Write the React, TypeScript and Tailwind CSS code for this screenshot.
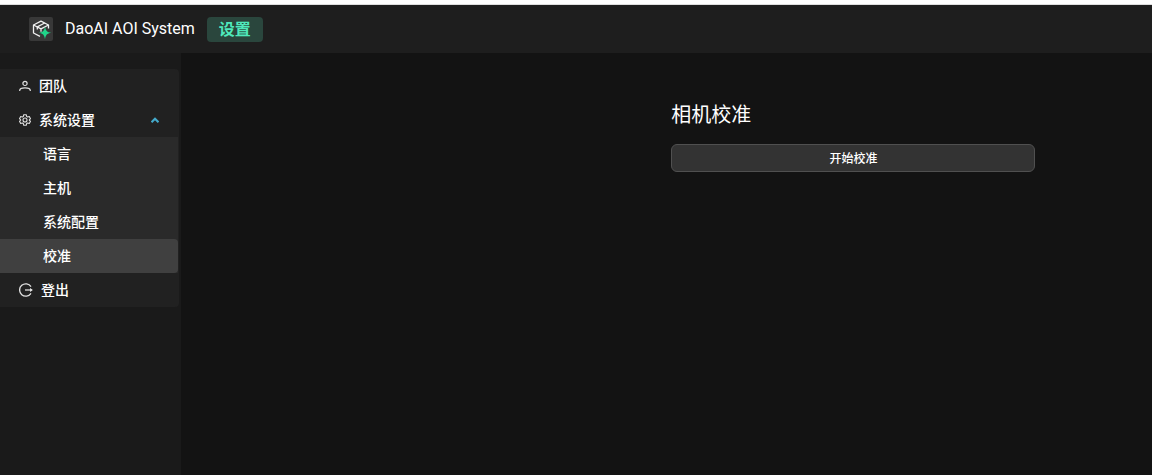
import React, { useState } from "react";

const UserIcon = () => (
  <svg className="size-3 shrink-0" viewBox="0 0 12 12" fill="none" stroke="#e0e0e0" strokeWidth="1.200" aria-hidden="true">
    <circle cx="6" cy="3.4" r="2.1" />
    <path d="M0.7 11v-.4C.7 8.600 3.100 7.900 6 7.900s5.300.700 5.300 2.700v.4" />
  </svg>
);

const GearIcon = () => (
  <svg className="size-3 shrink-0" viewBox="0 0 24 24" fill="none" stroke="#e0e0e0" strokeWidth="2.200" strokeLinejoin="round" aria-hidden="true">
    <path d="M9.500 1.500h5l.8 3.400 2 1.200 3.300-1 2.400 4.200-2.400 2.400v.6l2.400 2.400-2.400 4.200-3.300-1-2 1.200-.8 3.400h-5l-.8-3.400-2-1.200-3.300 1L1 14.700l2.400-2.400v-.6L1 9.300l2.400-4.200 3.300 1 2-1.200z" />
    <circle cx="12" cy="12" r="4" />
  </svg>
);

const LogoutIcon = () => (
  <svg className="size-3.5 shrink-0" viewBox="0 0 14 14" fill="none" stroke="#e0e0e0" strokeWidth="1.300" aria-hidden="true">
    <path d="M12 3.600A6.200 6.200 0 1 0 12 10.400" />
    <path d="M6 7h7" />
    <path d="M11 5.100 13.900 7 11 8.900z" fill="#e0e0e0" stroke="none" />
  </svg>
);

const Logo = () => (
  <svg className="size-6 shrink-0" viewBox="0 0 24 24" fill="none" aria-hidden="true">
    <rect width="24" height="24" rx="2" fill="#383838" />
    <g stroke="#f0f0f0" strokeWidth="1.300" strokeLinejoin="round">
      <path d="M11 19.300 4.500 16V8L12 4.200 19.500 8v3.500" />
      <path d="M4.500 8 12 11.800 19.500 8M12 11.800v3" />
      <path d="M15.700 6 8.300 9.900v2.600" />
    </g>
    <path d="M16 9.400c.7 4.300 2 5.700 6.300 6.400-4.300.7-5.600 2-6.300 6.400-.7-4.400-2-5.700-6.300-6.400 4.300-.7 5.600-2.100 6.300-6.400z" fill="#20d58a" />
  </svg>
);

const settings = ["语言", "主机", "系统配置", "校准"];

export default function App() {
  const [open, setOpen] = useState(true);
  const [active, setActive] = useState("校准");

  return (
    <div className="flex min-h-screen flex-col border-t-4 border-white bg-[#131313] font-['Open_Sans','Noto_Sans_CJK_SC',sans-serif] text-white">
      <header className="flex h-[49px] items-center border-t border-[#dedede] bg-[#1e1e1e] pl-[29px]">
        <Logo />
        <span className="ml-3 font-['Roboto',sans-serif] text-base">DaoAI AOI System</span>
        <span className="ml-3 flex h-[25px] items-center rounded bg-[#2a463d] px-3 text-base font-bold text-[#4fe9bb]">设置</span>
      </header>
      <div className="flex grow">
        <aside className="w-[181px] shrink-0 bg-[#1a1a1a] pt-4">
          <nav className="mr-0.5 rounded-r-sm bg-[#212121] text-sm font-medium">
            <a href="#team" className="flex h-[34px] items-center gap-2 pl-[19px]">
              <UserIcon />
              团队
            </a>
            <button
              type="button"
              aria-expanded={open}
              onClick={() => setOpen(!open)}
              className="flex h-[34px] w-full items-center gap-2 pr-5 pl-[19px]"
            >
              <GearIcon />
              系统设置
              <svg className={open ? "ml-auto h-1.5 w-2" : "ml-auto h-1.5 w-2 rotate-180"} viewBox="0 0 8 6" fill="none" stroke="#44aacb" strokeWidth="2.200" aria-hidden="true">
                <path d="M.5 5.200 4 1.800 7.500 5.200" />
              </svg>
            </button>
            {open && (
              <ul className="mr-px bg-[#2a2a2a]">
                {settings.map((item) => (
                  <li key={item}>
                    <a
                      href={`#${item}`}
                      onClick={() => setActive(item)}
                      className={
                        item === active
                          ? "flex h-[34px] items-center rounded-r bg-[#404040] pl-[43px]"
                          : "flex h-[34px] items-center pl-[43px]"
                      }
                    >
                      {item}
                    </a>
                  </li>
                ))}
              </ul>
            )}
            <a href="#logout" className="flex h-[34px] items-center gap-2 pl-[19px]">
              <LogoutIcon />
              登出
            </a>
          </nav>
        </aside>
        <main className="flex grow justify-end pt-12">
          <section className="mr-[12%] w-3/8">
            <h1 className="text-xl leading-7">相机校准</h1>
            <button type="button" className="mt-[15px] h-7 w-full rounded-md border border-[#505050] bg-[#333333] pt-0.5 text-xs font-medium">
              开始校准
            </button>
          </section>
        </main>
      </div>
    </div>
  );
}
